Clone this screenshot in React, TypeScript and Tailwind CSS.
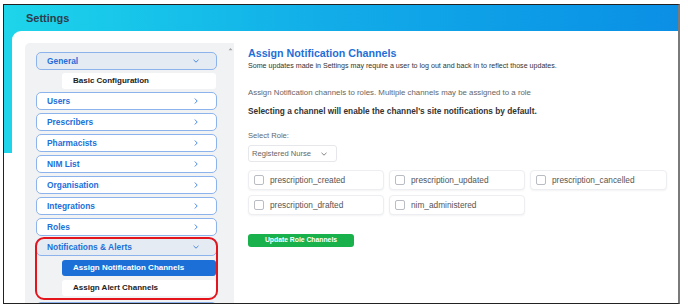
import React from "react"

const font = { fontFamily: '"Liberation Sans", Arial, sans-serif' }

const Chevron = ({ down = false, color = "#3b7fe0" }: { down?: boolean; color?: string }) => (
  <svg width="8" height="8" viewBox="0 0 8 8" fill="none">
    {down ? (
      <path d="M1.5 2.8 L4 5.2 L6.5 2.8" stroke={color} strokeWidth="0.9" />
    ) : (
      <path d="M2.8 1.5 L5.2 4 L2.8 6.5" stroke={color} strokeWidth="0.9" />
    )}
  </svg>
)

const MenuItem = ({ label, open = false }: { label: string; open?: boolean }) => (
  <div
    className={`h-[18px] w-[181px] shrink-0 flex items-center justify-between pl-[10px] pr-[16px] rounded-[5px] border border-[#8db3ec] ${
      open ? "bg-[#e5ebf3]" : "bg-white"
    }`}
  >
    <span className="text-[8.4px] font-bold text-[#2170d9] leading-none">{label}</span>
    <Chevron down={open} />
  </div>
)

const SubItem = ({ label, active = false }: { label: string; active?: boolean }) => (
  <div
    className={`ml-[26px] h-[16px] w-[154px] shrink-0 flex items-center pl-[11px] rounded-[3px] ${
      active ? "bg-[#1b6fd6] text-white" : "bg-white text-[#222]"
    }`}
  >
    <span className="text-[8px] font-bold leading-none">{label}</span>
  </div>
)

const channels = [
  "prescription_created",
  "prescription_updated",
  "prescription_cancelled",
  "prescription_drafted",
  "nim_administered",
]

const App: React.FC = () => {
  return (
    <div className="w-[688px] h-[308px] bg-white pt-[4px] pl-[3px]" style={font}>
      <div className="w-[677px] h-[300px] border-t border-l border-b border-[#222] border-r-2 border-r-[#7a7a7a] overflow-hidden flex flex-col bg-[linear-gradient(to_bottom,#1ed4ea_0,#1ed4ea_148px,#ffffff_148px)]">
        <div className="h-[26px] shrink-0 flex items-center pl-[22px] bg-gradient-to-r from-[#1ed5ea] via-[#12abe8] to-[#0b8fe5]">
          <span className="text-[11px] font-bold text-[#2e3c4b]">Settings</span>
        </div>

        <div className="flex-1 ml-[8px] bg-white rounded-tl-[9px] flex items-start gap-[14px] pl-[13px] min-h-0">
          <div className="mt-[12px] self-stretch w-[209px] bg-[#f1f2f4] rounded-tl-[5px] flex">
            <div className="pl-[11px] pt-[9px] flex flex-col w-[201px]">
              <MenuItem label="General" open />
              <div className="mt-[3px]">
                <SubItem label="Basic Configuration" />
              </div>
              <div className="mt-[3px] flex flex-col gap-[3px]">
                <MenuItem label="Users" />
                <MenuItem label="Prescribers" />
                <MenuItem label="Pharmacists" />
                <MenuItem label="NIM List" />
                <MenuItem label="Organisation" />
                <MenuItem label="Integrations" />
                <MenuItem label="Roles" />
              </div>
              <div className="relative mt-[2px] flex flex-col w-[181px] pb-[4px]">
                <MenuItem label="Notifications & Alerts" open />
                <div className="mt-[4px] flex flex-col gap-[4px]">
                  <SubItem label="Assign Notification Channels" active />
                  <SubItem label="Assign Alert Channels" />
                </div>
                <div className="absolute -inset-x-[1px] -top-[1px] bottom-0 border-2 border-[#e3141c] rounded-[9px] pointer-events-none" />
              </div>
              <div className="mt-[2px]">
                <MenuItem label="Resident Search" />
              </div>
            </div>
            <div className="w-[8px] flex justify-center pt-[4px]">
              <svg width="5" height="4" viewBox="0 0 5 4">
                <path d="M0.5 3.2 L2.5 1 L4.5 3.2 Z" fill="#a3a6ab" />
              </svg>
            </div>
          </div>

          <div className="pt-[16px] flex flex-col">
            <h1 className="text-[10.7px] leading-[13px] font-bold text-[#1f6fd8]">
              Assign Notification Channels
            </h1>
            <p className="mt-[1px] text-[7.1px] leading-[10px] text-[#333]">
              Some updates made in Settings may require a user to log out and back in to reflect those updates.
            </p>
            <p className="mt-[17px] text-[7.85px] leading-[10px] text-[#666]">
              Assign Notification channels to roles. Multiple channels may be assigned to a role
            </p>
            <p className="mt-[8px] text-[8.3px] leading-[10px] font-bold text-[#333]">
              Selecting a channel will enable the channel's site notifications by default.
            </p>
            <p className="mt-[15px] text-[7.6px] leading-[10px] text-[#666]">Select Role:</p>
            <div className="mt-[4px] w-[89px] h-[17px] rounded-[3px] border border-[#e6e7ea] bg-white flex items-center justify-between pl-[3px] pr-[8px]">
              <span className="text-[7.6px] text-[#666] leading-none">Registered Nurse</span>
              <Chevron down color="#777" />
            </div>
            <div className="mt-[8px] grid grid-cols-[136px_136px_137px] gap-x-[5px] gap-y-[5px]">
              {channels.map((c) => (
                <div
                  key={c}
                  className="h-[20px] rounded-[4px] border border-[#eceef1] bg-white shadow-[0_1px_2px_rgba(0,0,0,0.05)] flex items-center pl-[5px] gap-[6px]"
                >
                  <div className="w-[10px] h-[10px] rounded-[2px] border border-[#b9bcc2] bg-white" />
                  <span className="text-[8.3px] text-[#555] leading-none">{c}</span>
                </div>
              ))}
            </div>
            <button className="mt-[19px] w-[106px] h-[13px] rounded-[3px] bg-[#19b14b] text-white text-[6.8px] font-bold leading-none flex items-center justify-center">
              Update Role Channels
            </button>
          </div>
        </div>
      </div>
    </div>
  )
}

export default App
